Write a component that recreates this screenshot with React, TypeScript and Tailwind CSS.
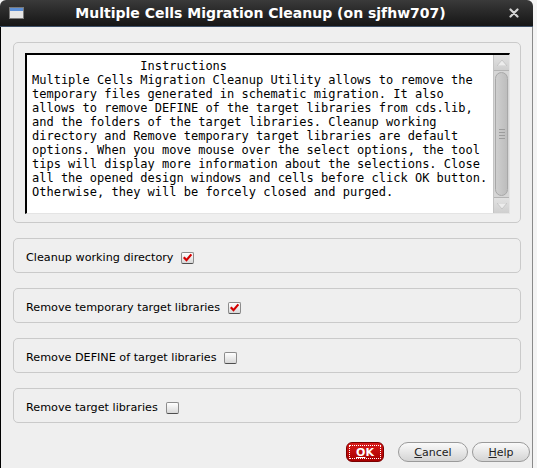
import React from 'react';

const instructionLines = [
  '               Instructions',
  'Multiple Cells Migration Cleanup Utility allows to remove the',
  'temporary files generated in schematic migration. It also',
  'allows to remove DEFINE of the target libraries from cds.lib,',
  'and the folders of the target libraries. Cleanup working',
  'directory and Remove temporary target libraries are default',
  'options. When you move mouse over the select options, the tool',
  'tips will display more information about the selections. Close',
  'all the opened design windows and cells before click OK button.',
  'Otherwise, they will be forcely closed and purged.',
];

const options = [
  { label: 'Cleanup working directory', checked: true },
  { label: 'Remove temporary target libraries', checked: true },
  { label: 'Remove DEFINE of target libraries', checked: false },
  { label: 'Remove target libraries', checked: false },
];

const CheckBox: React.FC<{ checked: boolean }> = ({ checked }) => (
  <span className="relative inline-block w-[13px] h-[12px] rounded-[2px] border border-[#8c8c8c] border-b-[#4e4e4e] bg-gradient-to-b from-white to-[#d8d8d8]">
    {checked && (
      <svg viewBox="0 0 12 12" className="absolute left-[0px] top-[0px] w-[11px] h-[10px]">
        <path d="M2.4 6 L4.8 8.6 L9.8 2.6" fill="none" stroke="#d40000" strokeWidth="2.6" strokeLinecap="square" />
      </svg>
    )}
  </span>
);

const Scrollbar: React.FC = () => (
  <div className="w-[16px] flex flex-col bg-[#d6d6d6] border-l border-[#c4c4c4]">
    <div className="h-[16px] flex items-center justify-center bg-gradient-to-b from-[#e2e2e2] to-[#cfcfcf] border-b border-[#b4b4b4]">
      <svg viewBox="0 0 10 6" className="w-[10px] h-[6px]">
        <path d="M0 6 L5 0 L10 6 Z" fill="#ececec" stroke="#b8b8b8" strokeWidth="0.6" />
      </svg>
    </div>
    <div className="flex-1 px-[1px] py-[1px]">
      <div className="h-full rounded-[7px] border border-[#a8a8a8] bg-gradient-to-r from-[#cfcfcf] to-[#bdbdbd] flex flex-col items-center justify-center gap-[2px]">
        <div className="w-[6px] h-[1px] bg-[#9c9c9c]" />
        <div className="w-[6px] h-[1px] bg-[#9c9c9c]" />
        <div className="w-[6px] h-[1px] bg-[#9c9c9c]" />
        <div className="w-[6px] h-[1px] bg-[#9c9c9c]" />
      </div>
    </div>
    <div className="h-[16px] flex items-center justify-center bg-gradient-to-b from-[#e2e2e2] to-[#cfcfcf] border-t border-[#b4b4b4]">
      <svg viewBox="0 0 10 6" className="w-[10px] h-[6px]">
        <path d="M0 0 L5 6 L10 0 Z" fill="#ececec" stroke="#b8b8b8" strokeWidth="0.6" />
      </svg>
    </div>
  </div>
);

const App: React.FC = () => {
  return (
    <div className="w-[537px] h-[468px] bg-[#f4f4f4] overflow-hidden font-['DejaVu_Sans',sans-serif]">
      <div className="w-[533px] h-full flex flex-col">
        {/* Title bar */}
        <div className="h-[27px] rounded-t-[6px] bg-gradient-to-b from-[#3a3a3a] to-[#161616] border-b border-[#3e5068] flex items-center px-[9px] relative">
          <div className="w-[15px] h-[12px] border border-[#7a7a7a] bg-[#e6e6e6] flex flex-col">
            <div className="h-[3px] bg-[#5c8fd6]" />
          </div>
          <div className="flex-1 text-center text-white font-bold text-[14px] pr-[12px]">
            Multiple Cells Migration Cleanup (on sjfhw707)
          </div>
          <svg viewBox="0 0 10 10" className="w-[10px] h-[10px] mr-[5px]">
            <path d="M1.5 1.5 L8.5 8.5 M8.5 1.5 L1.5 8.5" stroke="#d4d4d4" strokeWidth="2.2" strokeLinecap="round" />
          </svg>
        </div>

        {/* Body */}
        <div className="flex-1 bg-[#efefef] border-l border-black border-r border-r-[#8a8a8a] pl-[12px] pr-[11px] pt-[15px]">
          <div className="h-[181px] rounded-[5px] border border-[#cacaca] pl-[11px] pr-[10px] pt-[10px]">
            <div className="h-[161px] flex bg-white border-t-2 border-l-2 border-black border-r border-b border-r-[#e4e4e4] border-b-[#e4e4e4]">
              <div className="flex-1 pl-[5px] pt-[4px] font-['DejaVu_Sans_Mono',monospace] text-[12px] leading-[14px] text-black whitespace-pre">
                {instructionLines.map((line, i) => (
                  <div key={i}>{line}</div>
                ))}
              </div>
              <Scrollbar />
            </div>
          </div>

          {options.map((opt) => (
            <div
              key={opt.label}
              className="mt-[15px] h-[35px] rounded-[5px] border border-[#cacaca] flex items-center gap-[8px] pl-[12px] pt-[5px] text-[11.2px] text-black"
            >
              <span>{opt.label}</span>
              <CheckBox checked={opt.checked} />
            </div>
          ))}

          <div className="mt-[19px] mr-[-9px] flex justify-end items-center">
            <button className="w-[38px] h-[20px] rounded-[6px] bg-gradient-to-b from-[#d81818] to-[#a80000] border border-[#7a0000] p-[2px]">
              <div className="w-full h-full border border-dotted border-white flex items-center justify-center text-white font-bold text-[11px] leading-none">
                <span><span className="underline">O</span>K</span>
              </div>
            </button>
            <button className="ml-[14px] w-[70px] h-[20px] rounded-full bg-gradient-to-b from-[#fafafa] to-[#d4d4d4] border border-[#9a9a9a] text-[11px] text-[#222] leading-none">
              <span className="underline">C</span>ancel
            </button>
            <button className="ml-[4px] w-[58px] h-[20px] rounded-full bg-gradient-to-b from-[#fafafa] to-[#d4d4d4] border border-[#9a9a9a] text-[11px] text-[#222] leading-none">
              <span className="underline">H</span>elp
            </button>
          </div>
        </div>
      </div>
    </div>
  );
};

export default App;
